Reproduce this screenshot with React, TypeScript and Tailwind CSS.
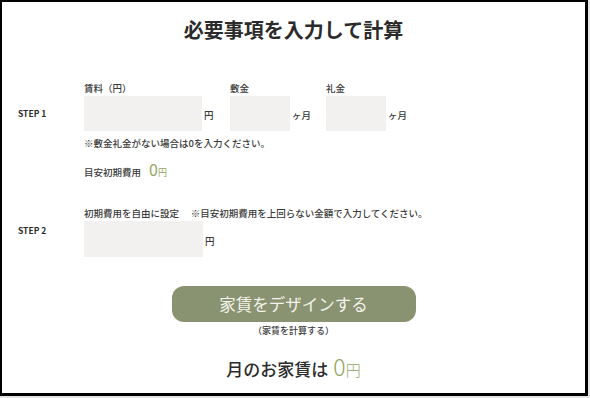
import React from "react";

const font = { fontFamily: '"Noto Sans CJK JP", "Noto Sans", sans-serif' };

const Field = ({ label, width, unit, boxWidth }: { label: string; width: string; unit: string; boxWidth: string }) => (
    <div className={`flex flex-col ${width}`}>
        <span className="h-[12px] leading-[12px] text-[9.5px] font-medium text-[#3a3a3a]">{label}</span>
        <div className="mt-[2px] flex items-center gap-[2px]">
            <div className={`h-[35px] bg-[#f2f1f0] ${boxWidth}`}></div>
            <span className="mt-[4px] text-[9.5px] font-medium text-[#3a3a3a]">{unit}</span>
        </div>
    </div>
)

const App = () => {
    return (
        <div className="w-[590px] h-[398px] bg-[#e4e4e4]" style={font}>
            <div className="w-[588px] h-[396px] bg-white border-black border-l-2 border-t-2 border-r-[3px] border-b-[3px] flex flex-col">

                <h1 className="mt-[15px] text-center text-[20px] leading-[26px] font-bold text-[#2b2b2b]">必要事項を入力して計算</h1>

                {/* step 1 */}
                <div className="mt-[39px] flex">
                    <span className="ml-[16px] w-[66px] pt-[25px] h-[12px] leading-[12px] text-[8.5px] font-bold text-[#2b2b2b]">STEP 1</span>
                    <div className="flex flex-col">
                        <div className="flex">
                            <Field label="賃料（円）" width="w-[146px]" unit="円" boxWidth="w-[118px]" />
                            <Field label="敷金" width="w-[96px]" unit="ヶ月" boxWidth="w-[60px]" />
                            <Field label="礼金" width="w-[90px]" unit="ヶ月" boxWidth="w-[60px]" />
                        </div>
                        <p className="mt-[6px] h-[12px] leading-[12px] text-[9.5px] font-medium text-[#3a3a3a]">※敷金礼金がない場合は0を入力ください。</p>
                        <div className="mt-[8px] h-[20px] flex items-baseline">
                            <span className="text-[9.5px] font-medium text-[#3a3a3a]">目安初期費用</span>
                            <span className="ml-[8px] text-[16px] text-[#93a562]">0</span>
                            <span className="text-[9px] text-[#93a562]">円</span>
                        </div>
                    </div>
                </div>

                {/* step 2 */}
                <div className="mt-[30px] flex">
                    <span className="ml-[16px] w-[66px] pt-[17px] h-[12px] leading-[12px] text-[8.5px] font-bold text-[#2b2b2b]">STEP 2</span>
                    <div className="flex flex-col">
                        <span className="h-[12px] leading-[12px] text-[9.5px] font-medium text-[#3a3a3a]">初期費用を自由に設定　 ※目安初期費用を上回らない金額で入力してください。</span>
                        <div className="mt-[2px] flex items-center gap-[2px]">
                            <div className="h-[36px] w-[119px] bg-[#f2f1f0]"></div>
                            <span className="mt-[4px] text-[9.5px] font-medium text-[#3a3a3a]">円</span>
                        </div>
                    </div>
                </div>

                <button type="button" className="mt-[29px] mx-auto w-[244px] h-[36px] rounded-[12px] bg-[#8a9371] text-[16.5px] text-[#f3f3ec] leading-[36px]">
                    家賃をデザインする
                </button>
                <p className="mt-[3px] text-center h-[12px] leading-[12px] text-[9px] font-medium text-[#3a3a3a]">（家賃を計算する）</p>

                <div className="mt-[12px] flex items-baseline justify-center">
                    <span className="text-[17px] font-medium text-[#2b2b2b]">月のお家賃は</span>
                    <span className="ml-[5px] text-[23px] font-light text-[#93a562]">0</span>
                    <span className="text-[15px] font-light text-[#93a562]">円</span>
                </div>

            </div>
        </div>
    )
}
export default App
